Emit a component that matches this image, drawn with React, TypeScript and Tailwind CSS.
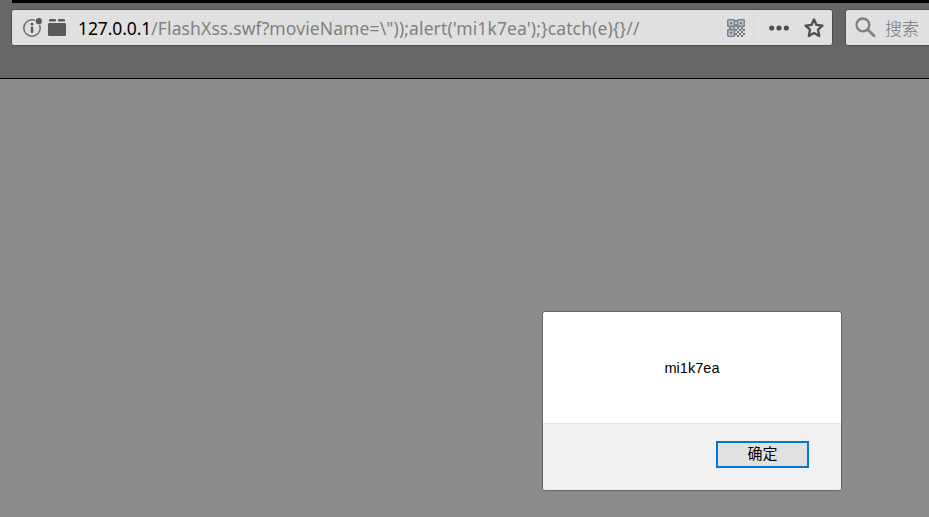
function InfoIcon() {
  return (
    <svg className="shrink-0" width="20" height="20" viewBox="0 0 20 20" fill="none">
      <circle cx="9" cy="10" r="8.2" stroke="#6c6c6c" strokeWidth="1.5" />
      <circle cx="15.8" cy="3.2" r="4" fill="#e0e0e0" />
      <circle cx="15.8" cy="3.2" r="3.1" fill="#5a5a5a" />
      <circle cx="9" cy="6.2" r="1.4" fill="#5a5a5a" />
      <path d="M9 9.6v4.2" stroke="#5a5a5a" strokeWidth="2.4" strokeLinecap="round" />
    </svg>
  );
}

function PluginIcon() {
  return (
    <svg className="block shrink-0" width="18" height="17" viewBox="0 0 18 17" fill="#5a5a5a">
      <rect x="1" y="0" width="7" height="2.6" rx="1.2" />
      <rect x="10" y="0" width="7" height="2.6" rx="1.2" />
      <rect x="0" y="4" width="18" height="13" rx="1.3" />
    </svg>
  );
}

function QrIcon() {
  return (
    <svg className="shrink-0" width="18" height="18" viewBox="0 0 18 18">
      <g fill="#c3c9cf" stroke="#7b858f" strokeWidth="1.6">
        <rect x="0.8" y="0.8" width="6.6" height="6.6" rx="0.6" />
        <rect x="10.6" y="0.8" width="6.6" height="6.6" rx="0.6" />
        <rect x="0.8" y="10.6" width="6.6" height="6.6" rx="0.6" />
      </g>
      <path
        fill="#6f7983"
        d="M3 3h2.2v2.2H3zM12.8 3H15v2.2h-2.2zM3 12.8h2.2V15H3zM8.2 1h1.6v2H8.2zM8.2 5h1.6v3H8.2zM2 8.2h2.5v1.6H2zM6 8.2h2.2v1.6H6zM10 8h2v2h-2zM14 8.4h2v2h-2zM8 10h2v2H8zM12 10h2v2h-2zM16 10h2v2h-2zM10 12h2v2h-2zM14 12h2v2h-2zM8 14h2v2H8zM12 14h2v2h-2zM16 14h2v2h-2zM10 16h2v2h-2zM14 16h2v2h-2z"
      />
    </svg>
  );
}

function StarIcon() {
  return (
    <svg className="block shrink-0" width="20" height="20" viewBox="0 0 20 20" fill="none" stroke="#505050" strokeWidth="2.4" strokeLinejoin="round">
      <path d="M10 1.5l2.5 5.4 5.9.7-4.4 4 1.2 6.4-5.2-3-5.2 3L6 11.6l-4.4-4 5.9-.7z" />
    </svg>
  );
}

function SearchIcon() {
  return (
    <svg className="shrink-0" width="21" height="21" viewBox="0 0 21 21" fill="none" stroke="#808080" strokeLinecap="round">
      <circle cx="7.9" cy="7.9" r="6.4" strokeWidth="2.3" />
      <path d="M12.8 12.8l6.2 6" strokeWidth="2.8" />
    </svg>
  );
}

export default function App() {
  return (
    <div className="relative flex h-[517px] w-[929px] flex-col overflow-hidden bg-[#8b8b8b]">
      <header className="h-[79px] border-b border-black bg-[#666666]">
        <div className="ml-3 h-[3px] bg-black" />
        <div className="mt-[6px] ml-[11px] flex gap-3">
          <div className="flex h-[37px] w-[822px] shrink-0 items-center rounded-[3px] border border-[#505050] bg-[#e0e0e0] pl-[11px]">
            <InfoIcon />
            <span className="ml-[5px]"><PluginIcon /></span>
            <div className="ml-[12px] w-[649px] pt-[2px] font-['Noto_Sans','Noto_Sans_CJK_SC',sans-serif] text-[17.5px] whitespace-pre text-[#808080]">
              <span className="tracking-[-0.1px] text-black">127.0.0.1</span>
              <span className="tracking-[0.11px]">{`/FlashXss.swf?movieName=\\"));alert('mi1k7ea');}catch(e){}//`}</span>
            </div>
            <QrIcon />
            <div className="ml-2 h-7 w-px bg-[#dadada]" />
            <svg className="ml-[15px] shrink-0" width="20" height="6" viewBox="0 0 20 6" fill="#505050">
              <circle cx="2.7" cy="3" r="2.6" />
              <circle cx="10" cy="3" r="2.6" />
              <circle cx="17.3" cy="3" r="2.6" />
            </svg>
            <span className="ml-[15px]"><StarIcon /></span>
          </div>
          <div className="flex h-[37px] w-[120px] shrink-0 items-center rounded-[3px] border border-[#505050] bg-[#e0e0e0] pl-[9px]">
            <SearchIcon />
            <span className="ml-[9px] pt-px font-['Noto_Sans_CJK_SC',sans-serif] text-[17px] leading-5 font-light text-[#757575]">搜索</span>
          </div>
        </div>
      </header>
      <div role="dialog" className="absolute top-[311px] left-[542px] flex h-[180px] w-[300px] flex-col overflow-hidden rounded-[3px] border border-[#666666] bg-white">
        <div className="flex h-[111px] items-center justify-center pt-[2px] font-['Liberation_Sans',sans-serif] text-[14.6px] text-black">mi1k7ea</div>
        <div className="flex flex-1 justify-end border-t border-[#e3e3e3] bg-[#f1f1f1] pt-[17px] pr-8">
          <button className="flex h-[27px] w-[93px] items-center justify-center border-2 border-[#0078d7] bg-[#e1e1e1] pb-[3px] font-['Noto_Sans_CJK_SC',sans-serif] text-[15px] leading-5 text-black">确定</button>
        </div>
      </div>
    </div>
  );
}
